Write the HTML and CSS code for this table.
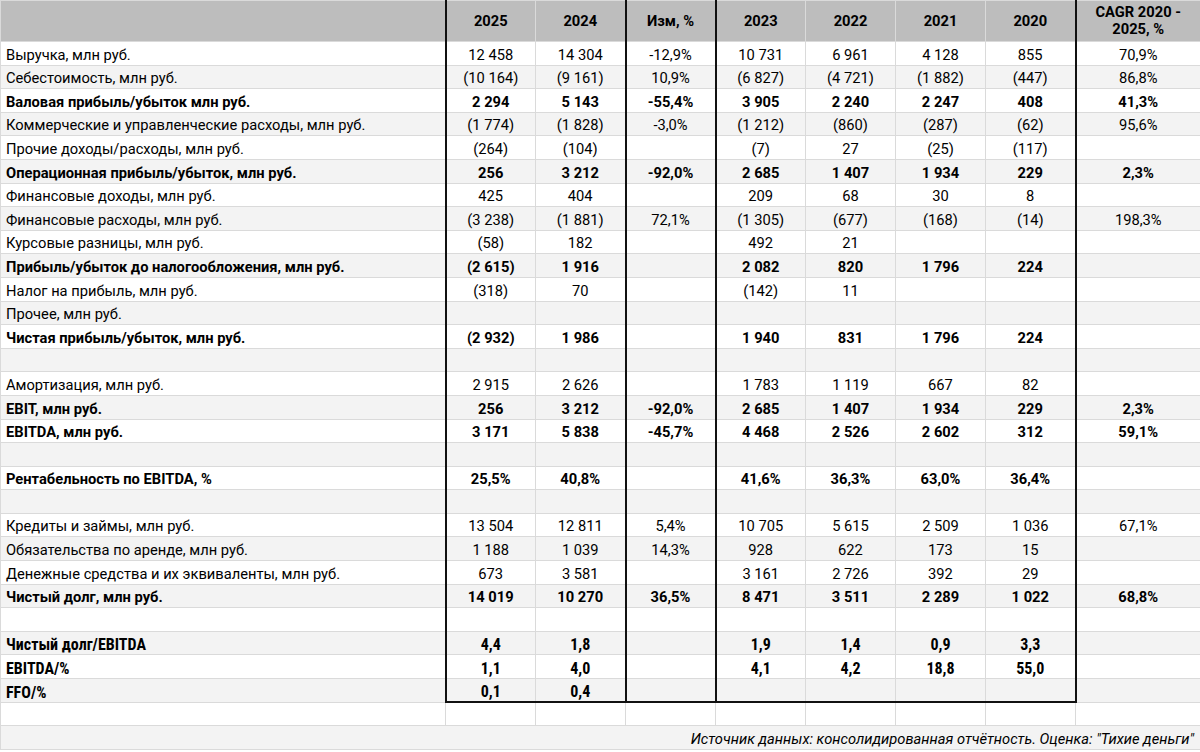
FILE: index.html
```html
<!DOCTYPE html>
<html lang="ru">
<head>
<meta charset="utf-8">
<title>Финансовые показатели</title>
<link rel="stylesheet" href="styles.css">
</head>
<body>
<table class="sheet">
<colgroup>
<col class="c-lbl"><col class="c-num"><col class="c-num"><col class="c-num"><col class="c-num"><col class="c-num"><col class="c-num"><col class="c-num"><col class="c-cagr">
</colgroup>
<thead>
<tr class="box"><th></th><th>2025</th><th>2024</th><th>Изм, %</th><th>2023</th><th>2022</th><th>2021</th><th>2020</th><th class="wrap">CAGR 2020 -<br>2025, %</th></tr>
</thead>
<tbody>
<tr class="box w"><td class="lbl">Выручка, млн руб.</td><td>12 458</td><td>14 304</td><td>-12,9%</td><td>10 731</td><td>6 961</td><td>4 128</td><td>855</td><td>70,9%</td></tr>
<tr class="box g"><td class="lbl">Себестоимость, млн руб.</td><td>(10 164)</td><td>(9 161)</td><td>10,9%</td><td>(6 827)</td><td>(4 721)</td><td>(1 882)</td><td>(447)</td><td>86,8%</td></tr>
<tr class="box w b"><td class="lbl">Валовая прибыль/убыток млн руб.</td><td>2 294</td><td>5 143</td><td>-55,4%</td><td>3 905</td><td>2 240</td><td>2 247</td><td>408</td><td>41,3%</td></tr>
<tr class="box g"><td class="lbl">Коммерческие и управленческие расходы, млн руб.</td><td>(1 774)</td><td>(1 828)</td><td>-3,0%</td><td>(1 212)</td><td>(860)</td><td>(287)</td><td>(62)</td><td>95,6%</td></tr>
<tr class="box w"><td class="lbl">Прочие доходы/расходы, млн руб.</td><td>(264)</td><td>(104)</td><td></td><td>(7)</td><td>27</td><td>(25)</td><td>(117)</td><td></td></tr>
<tr class="box g b"><td class="lbl">Операционная прибыль/убыток, млн руб.</td><td>256</td><td>3 212</td><td>-92,0%</td><td>2 685</td><td>1 407</td><td>1 934</td><td>229</td><td>2,3%</td></tr>
<tr class="box w"><td class="lbl">Финансовые доходы, млн руб.</td><td>425</td><td>404</td><td></td><td>209</td><td>68</td><td>30</td><td>8</td><td></td></tr>
<tr class="box g"><td class="lbl">Финансовые расходы, млн руб.</td><td>(3 238)</td><td>(1 881)</td><td>72,1%</td><td>(1 305)</td><td>(677)</td><td>(168)</td><td>(14)</td><td>198,3%</td></tr>
<tr class="box w"><td class="lbl">Курсовые разницы, млн руб.</td><td>(58)</td><td>182</td><td></td><td>492</td><td>21</td><td></td><td></td><td></td></tr>
<tr class="box g b"><td class="lbl">Прибыль/убыток до налогообложения, млн руб.</td><td>(2 615)</td><td>1 916</td><td></td><td>2 082</td><td>820</td><td>1 796</td><td>224</td><td></td></tr>
<tr class="box w"><td class="lbl">Налог на прибыль, млн руб.</td><td>(318)</td><td>70</td><td></td><td>(142)</td><td>11</td><td></td><td></td><td></td></tr>
<tr class="box g"><td class="lbl">Прочее, млн руб.</td><td></td><td></td><td></td><td></td><td></td><td></td><td></td><td></td></tr>
<tr class="box w b"><td class="lbl">Чистая прибыль/убыток, млн руб.</td><td>(2 932)</td><td>1 986</td><td></td><td>1 940</td><td>831</td><td>1 796</td><td>224</td><td></td></tr>
<tr class="box g"><td class="lbl"></td><td></td><td></td><td></td><td></td><td></td><td></td><td></td><td></td></tr>
<tr class="box w"><td class="lbl">Амортизация, млн руб.</td><td>2 915</td><td>2 626</td><td></td><td>1 783</td><td>1 119</td><td>667</td><td>82</td><td></td></tr>
<tr class="box g b"><td class="lbl">EBIT, млн руб.</td><td>256</td><td>3 212</td><td>-92,0%</td><td>2 685</td><td>1 407</td><td>1 934</td><td>229</td><td>2,3%</td></tr>
<tr class="box w b"><td class="lbl">EBITDA, млн руб.</td><td>3 171</td><td>5 838</td><td>-45,7%</td><td>4 468</td><td>2 526</td><td>2 602</td><td>312</td><td>59,1%</td></tr>
<tr class="box g"><td class="lbl"></td><td></td><td></td><td></td><td></td><td></td><td></td><td></td><td></td></tr>
<tr class="box w b"><td class="lbl">Рентабельность по EBITDA, %</td><td>25,5%</td><td>40,8%</td><td></td><td>41,6%</td><td>36,3%</td><td>63,0%</td><td>36,4%</td><td></td></tr>
<tr class="box g"><td class="lbl"></td><td></td><td></td><td></td><td></td><td></td><td></td><td></td><td></td></tr>
<tr class="box w"><td class="lbl">Кредиты и займы, млн руб.</td><td>13 504</td><td>12 811</td><td>5,4%</td><td>10 705</td><td>5 615</td><td>2 509</td><td>1 036</td><td>67,1%</td></tr>
<tr class="box g"><td class="lbl">Обязательства по аренде, млн руб.</td><td>1 188</td><td>1 039</td><td>14,3%</td><td>928</td><td>622</td><td>173</td><td>15</td><td></td></tr>
<tr class="box w"><td class="lbl">Денежные средства и их эквиваленты, млн руб.</td><td>673</td><td>3 581</td><td></td><td>3 161</td><td>2 726</td><td>392</td><td>29</td><td></td></tr>
<tr class="box g b"><td class="lbl">Чистый долг, млн руб.</td><td>14 019</td><td>10 270</td><td>36,5%</td><td>8 471</td><td>3 511</td><td>2 289</td><td>1 022</td><td>68,8%</td></tr>
<tr class="box w"><td class="lbl"></td><td></td><td></td><td></td><td></td><td></td><td></td><td></td><td></td></tr>
<tr class="box g b c"><td class="lbl">Чистый долг/EBITDA</td><td>4,4</td><td>1,8</td><td></td><td>1,9</td><td>1,4</td><td>0,9</td><td>3,3</td><td></td></tr>
<tr class="box w b c"><td class="lbl">EBITDA/%</td><td>1,1</td><td>4,0</td><td></td><td>4,1</td><td>4,2</td><td>18,8</td><td>55,0</td><td></td></tr>
<tr class="box g b c last"><td class="lbl">FFO/%</td><td>0,1</td><td>0,4</td><td></td><td></td><td></td><td></td><td></td><td></td></tr>
<tr class="w"><td class="lbl"></td><td></td><td></td><td></td><td></td><td></td><td></td><td></td><td></td></tr>
<tr class="g"><td class="source" colspan="9">Источник данных: консолидированная отчётность. Оценка: "Тихие деньги"</td></tr>
</tbody>
</table>
</body>
</html>
```

FILE: styles.css
```css
* {
  box-sizing: border-box;
}

html,
body {
  margin: 0;
  padding: 0;
  background: #ffffff;
}

body {
  font-family: Roboto, "Noto Sans", "Liberation Sans", sans-serif;
  font-size: 14.7px;
  color: #000000;
}

.sheet {
  border-collapse: collapse;
  table-layout: fixed;
  width: 1200px;
}

.c-lbl {
  width: 445px;
}

.c-num {
  width: 90px;
}

.c-cagr {
  width: 125px;
}

.sheet th,
.sheet td {
  border: 1px solid #dadada;
  padding: 0 5px 1px;
  height: 23.6px;
  white-space: nowrap;
  overflow: hidden;
  text-align: center;
  vertical-align: bottom;
  line-height: 17px;
}

.sheet th {
  height: 41px;
  padding: 0 5px;
  background: #bdbdbd;
  font-weight: 700;
  vertical-align: middle;
}

.sheet .wrap {
  white-space: normal;
}

.w {
  background: #ffffff;
}

.g {
  background: #f3f3f3;
}

.b td {
  font-weight: 700;
}

.c td {
  font-family: "Roboto Condensed", "Liberation Sans Narrow", "DejaVu Sans Condensed", sans-serif;
  font-size: 16px;
}

.sheet td.lbl {
  text-align: left;
}

.box > :nth-child(2),
.box > :nth-child(4),
.box > :nth-child(5),
.box > :nth-child(9) {
  border-left: 2px solid #111111;
}

.last > :nth-child(n+2):nth-child(-n+8) {
  border-bottom: 2px solid #111111;
}

.sheet td.source {
  text-align: right;
  font-style: italic;
  padding-right: 6px;
}
```
